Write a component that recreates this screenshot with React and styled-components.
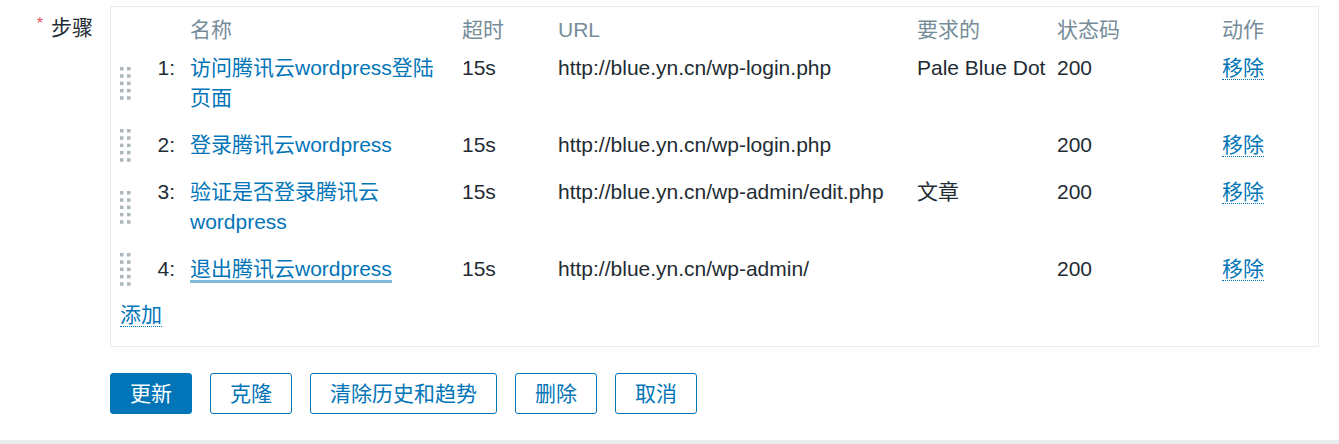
import React from "react";
import styled, { createGlobalStyle } from "styled-components";

const GlobalStyle = createGlobalStyle`
  html, body {
    margin: 0;
    padding: 0;
    background: #ffffff;
  }
  body {
    font-family: "Liberation Sans", Arial, "Noto Sans CJK SC", sans-serif;
    font-size: 21px;
    color: #1f2c33;
  }
`;

const Page = styled.div`
  width: 1339px;
  height: 444px;
  display: flex;
  flex-direction: column;
  overflow: hidden;
`;

const Form = styled.div`
  flex: 1;
  padding: 6px 20px 0 0;
`;

const FormRow = styled.div`
  display: grid;
  grid-template-columns: 93px 1fr;
  column-gap: 17px;
`;

const Label = styled.div`
  text-align: right;
  padding-top: 3px;
  line-height: 30px;
  white-space: nowrap;
`;

const Required = styled.span`
  color: #e45959;
  font-size: 16px;
  vertical-align: 6px;
  margin-right: 8px;
`;

const Box = styled.div`
  border: 1px solid #ebebeb;
  padding: 0 8px 16px 8px;
`;

const Table = styled.table`
  width: 100%;
  border-collapse: collapse;
  table-layout: fixed;
`;

const Th = styled.th`
  text-align: left;
  font-weight: normal;
  color: #768d99;
  line-height: 30px;
  padding: 8px 0 0;
  vertical-align: top;
  white-space: nowrap;
`;

const Td = styled.td`
  line-height: 30px;
  padding: 8px ${(p) => p.$padRight || 0}px 9px 0;
  vertical-align: top;
  text-align: ${(p) => (p.$right ? "right" : "left")};
`;

const HandleCell = styled.td`
  padding: 0;
  vertical-align: middle;
`;

const Link = styled.a`
  color: #0275b8;
  text-decoration: none;
  cursor: pointer;
  ${(p) =>
    p.$focused &&
    `
    border-bottom: 3px solid #80b9d9;
  `}
`;

const ActionLink = styled.a`
  color: #0275b8;
  text-decoration: none;
  border-bottom: 1px dotted #0275b8;
  cursor: pointer;
`;

const AddRow = styled.div`
  padding: 7px 0 0 1px;
  line-height: 30px;
`;

const HandleSvg = styled.svg`
  display: block;
  margin-left: 1px;
`;

const ButtonRow = styled.div`
  display: flex;
  gap: 18px;
  margin: 26px 0 0 110px;
`;

const Button = styled.button`
  height: 41px;
  padding: 0 19px;
  border-radius: 3px;
  border: 1px solid #0275b8;
  background: ${(p) => (p.$primary ? "#0275b8" : "#ffffff")};
  color: ${(p) => (p.$primary ? "#ffffff" : "#0275b8")};
  font-family: "Liberation Sans", Arial, "Noto Sans CJK SC", sans-serif;
  font-size: 21px;
  line-height: 39px;
  cursor: pointer;
`;

const Footer = styled.div`
  height: 4px;
  background: #ebeef0;
`;

const DragHandle = () => (
  <HandleSvg width="11" height="33" viewBox="0 0 11 33">
    {[0, 7.3, 14.6, 21.9, 29.2].map((y) =>
      [0, 7].map((x) => (
        <rect key={`${x}-${y}`} x={x} y={y} width="3.5" height="3.5" fill="#acb6bd" />
      ))
    )}
  </HandleSvg>
);

const steps = [
  { n: 1, name: "访问腾讯云wordpress登陆页面", timeout: "15s", url: "http://blue.yn.cn/wp-login.php", required: "Pale Blue Dot", code: "200" },
  { n: 2, name: "登录腾讯云wordpress", timeout: "15s", url: "http://blue.yn.cn/wp-login.php", required: "", code: "200" },
  { n: 3, name: "验证是否登录腾讯云wordpress", timeout: "15s", url: "http://blue.yn.cn/wp-admin/edit.php", required: "文章", code: "200" },
  { n: 4, name: "退出腾讯云wordpress", timeout: "15s", url: "http://blue.yn.cn/wp-admin/", required: "", code: "200", focused: true },
];

export default function App() {
  return (
    <Page>
      <GlobalStyle />
      <Form>
        <FormRow>
          <Label>
            <Required>*</Required>步骤
          </Label>
          <Box>
            <Table>
              <colgroup>
                <col style={{ width: 21 }} />
                <col style={{ width: 50 }} />
                <col style={{ width: 272 }} />
                <col style={{ width: 96 }} />
                <col style={{ width: 359 }} />
                <col style={{ width: 140 }} />
                <col style={{ width: 165 }} />
                <col />
              </colgroup>
              <thead>
                <tr>
                  <Th />
                  <Th />
                  <Th>名称</Th>
                  <Th>超时</Th>
                  <Th>URL</Th>
                  <Th>要求的</Th>
                  <Th>状态码</Th>
                  <Th>动作</Th>
                </tr>
              </thead>
              <tbody>
                {steps.map((s) => (
                  <tr key={s.n}>
                    <HandleCell>
                      <DragHandle />
                    </HandleCell>
                    <Td $right $padRight={15}>
                      {s.n}:
                    </Td>
                    <Td $padRight={18}>
                      <Link $focused={s.focused}>{s.name}</Link>
                    </Td>
                    <Td>{s.timeout}</Td>
                    <Td>{s.url}</Td>
                    <Td>{s.required}</Td>
                    <Td>{s.code}</Td>
                    <Td>
                      <ActionLink>移除</ActionLink>
                    </Td>
                  </tr>
                ))}
              </tbody>
            </Table>
            <AddRow>
              <ActionLink>添加</ActionLink>
            </AddRow>
          </Box>
        </FormRow>
        <ButtonRow>
          <Button $primary>更新</Button>
          <Button>克隆</Button>
          <Button>清除历史和趋势</Button>
          <Button>删除</Button>
          <Button>取消</Button>
        </ButtonRow>
      </Form>
      <Footer />
    </Page>
  );
}
